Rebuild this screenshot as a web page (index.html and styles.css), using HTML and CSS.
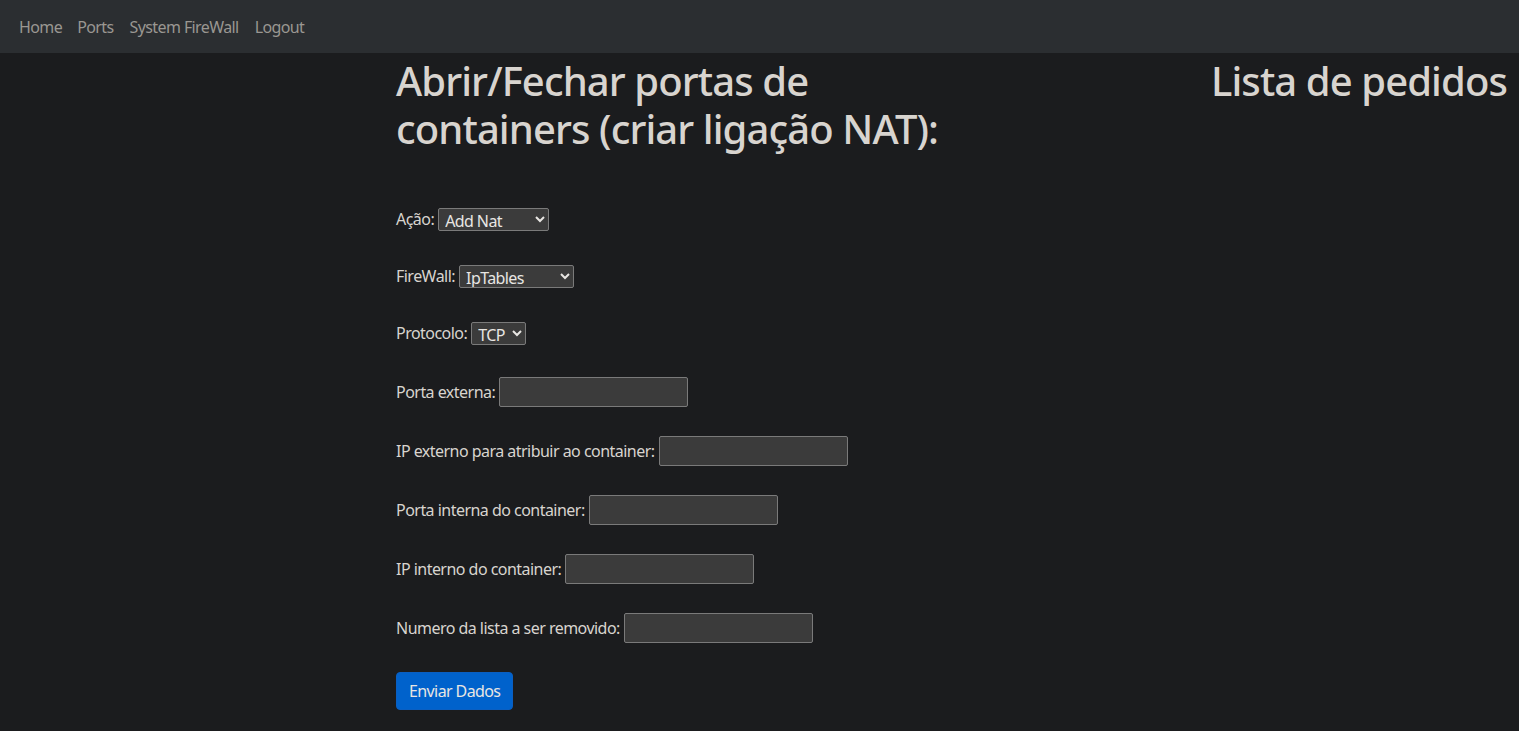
FILE: index.html
```html
<!DOCTYPE html>
<html lang="pt">
<head>
<meta charset="utf-8">
<title>Firewall</title>
<link rel="stylesheet" href="styles.css">
</head>
<body>
<nav class="navbar">
  <a class="nav-link" href="#">Home</a>
  <a class="nav-link" href="#">Ports</a>
  <a class="nav-link" href="#">System FireWall</a>
  <a class="nav-link" href="#">Logout</a>
</nav>
<main class="page">
  <section class="col-form">
    <h1 class="title">Abrir/Fechar portas de containers (criar ligação NAT):</h1>
    <form class="form">
      <div class="row row-select">
        <label>Ação:</label>
        <select class="sel sel-acao"><option>Add Nat</option></select>
      </div>
      <div class="row row-select">
        <label>FireWall:</label>
        <select class="sel sel-fw"><option>IpTables</option></select>
      </div>
      <div class="row row-select">
        <label>Protocolo:</label>
        <select class="sel sel-proto"><option>TCP</option></select>
      </div>
      <div class="row row-input">
        <label>Porta externa:</label>
        <input class="inp" type="text">
      </div>
      <div class="row row-input">
        <label>IP externo para atribuir ao container:</label>
        <input class="inp" type="text">
      </div>
      <div class="row row-input">
        <label>Porta interna do container:</label>
        <input class="inp" type="text">
      </div>
      <div class="row row-input">
        <label>IP interno do container:</label>
        <input class="inp" type="text">
      </div>
      <div class="row row-input">
        <label>Numero da lista a ser removido:</label>
        <input class="inp" type="text">
      </div>
      <button class="btn" type="button">Enviar Dados</button>
    </form>
  </section>
  <section class="col-list">
    <h1 class="title">Lista de pedidos</h1>
  </section>
</main>
</body>
</html>
```
FILE: styles.css
```css
* { box-sizing: border-box; }
html, body { margin: 0; padding: 0; }
body {
  background: #1b1c1e;
  color: #d8d4cf;
  font-family: "Noto Sans", "Open Sans", sans-serif;
  font-size: 16px;
  line-height: 1.5;
  letter-spacing: -0.53px;
  min-height: 731px;
}
.navbar {
  height: 53px;
  background: #2b2e31;
  display: flex;
  align-items: center;
  padding: 0 11px;
}
.nav-link {
  color: #9a9792;
  text-decoration: none;
  padding: 0 8px;
  font-size: 16px;
  letter-spacing: -0.6px;
}
.nav-link:first-child { margin-right: -1px; }
.page {
  display: flex;
  padding-left: 396px;
  padding-top: 4px;
}
.col-form { width: 600px; }
.col-list { margin-left: 215px; white-space: nowrap; }
.title {
  font-size: 40px;
  font-weight: 500;
  line-height: 1.2;
  letter-spacing: -0.9px;
  margin: 0 0 54px;
  color: #d8d4cf;
}
.form { display: flex; flex-direction: column; align-items: flex-start; }
.row { display: flex; align-items: center; }
.row label { margin-right: 4px; }
.row-select { height: 24px; margin-bottom: 33px; }
.row-select:nth-child(3) { margin-bottom: 32px; }
.row-input { height: 30px; margin-bottom: 29px; }
.sel {
  height: 23px;
  background: #3b3b3b;
  color: #e8e6e3;
  border: 1px solid #7a7a7a;
  border-radius: 2px;
  font-family: inherit;
  font-size: 16px;
  letter-spacing: -0.6px;
  padding: 0 2px;
  color-scheme: dark;
}
.sel-acao { width: 111px; }
.sel-fw { width: 115px; }
.sel-proto { width: 55px; }
.inp {
  width: 189px;
  height: 30px;
  background: #3b3b3b;
  border: 1px solid #7a7a7a;
  border-radius: 2px;
  color: #e8e6e3;
  font-family: inherit;
  font-size: 16px;
}
.btn {
  background: #0062cc;
  color: #e8e6e3;
  border: 1px solid #0a5fc2;
  border-radius: 4px;
  font-family: inherit;
  font-size: 16px;
  letter-spacing: -0.6px;
  line-height: 24px;
  padding: 6px 12px;
  height: 38px;
}
```
